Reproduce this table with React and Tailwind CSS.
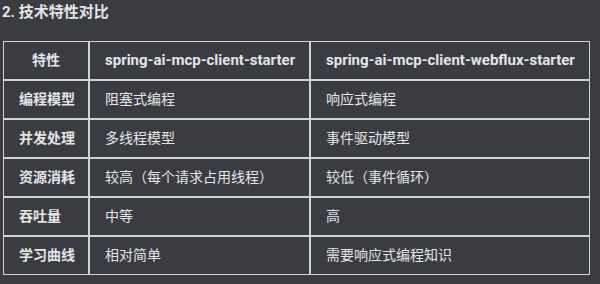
import React from "react";

const rows = [
  ["编程模型", "阻塞式编程", "响应式编程"],
  ["并发处理", "多线程模型", "事件驱动模型"],
  ["资源消耗", "较高（每个请求占用线程）", "较低（事件循环）"],
  ["吞吐量", "中等", "高"],
  ["学习曲线", "相对简单", "需要响应式编程知识"],
];

const cell = "border border-[#cfd3d9] px-[15px] py-2 leading-[21px] whitespace-nowrap";

export default function App() {
  return (
    <div
      className="min-h-screen w-full bg-[#3b3c41] text-[#e3e5e8] pl-[3px] pt-[2px]"
      style={{ fontFamily: 'Roboto, "Noto Sans CJK SC", sans-serif' }}
    >
      <h3 className="text-[15px] font-bold leading-[20px] -ml-px">2. 技术特性对比</h3>
      <table className="mt-[19px] table-fixed w-[587px] border-separate border-spacing-0 text-[14px]">
        <thead>
          <tr>
            <th className={`${cell} w-[86px] text-center font-bold`}>特性</th>
            <th className={`${cell} w-[221px] text-left font-bold text-[15px]`}>spring-ai-mcp-client-starter</th>
            <th className={`${cell} w-[280px] text-left font-bold text-[15px]`}>spring-ai-mcp-client-webflux-starter</th>
          </tr>
        </thead>
        <tbody>
          {rows.map((r) => (
            <tr key={r[0]}>
              <td className={`${cell} font-bold`}>{r[0]}</td>
              <td className={cell}>{r[1]}</td>
              <td className={cell}>{r[2]}</td>
            </tr>
          ))}
        </tbody>
      </table>
    </div>
  );
}
